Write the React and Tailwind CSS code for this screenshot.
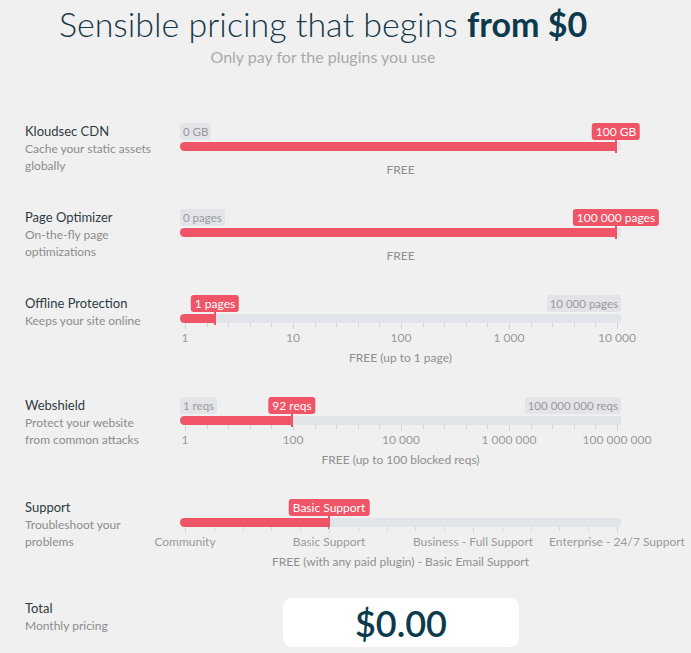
import React from 'react';

const rows = [
  {
    title: 'Kloudsec CDN',
    desc: ['Cache your static assets', 'globally'],
    handle: 436,
    tip: '100 GB',
    minLabel: '0 GB',
    footer: 'FREE',
  },
  {
    title: 'Page Optimizer',
    desc: ['On-the-fly page', 'optimizations'],
    handle: 436,
    tip: '100 000 pages',
    minLabel: '0 pages',
    footer: 'FREE',
  },
  {
    title: 'Offline Protection',
    desc: ['Keeps your site online'],
    handle: 35,
    tip: '1 pages',
    maxLabel: '10 000 pages',
    ticks: { count: 20, major: 5 },
    labels: ['1', '10', '100', '1 000', '10 000'],
    footer: 'FREE (up to 1 page)',
  },
  {
    title: 'Webshield',
    desc: ['Protect your website', 'from common attacks'],
    handle: 112,
    tip: '92 reqs',
    minLabel: '1 reqs',
    maxLabel: '100 000 000 reqs',
    ticks: { count: 20, major: 5 },
    labels: ['1', '100', '10 000', '1 000 000', '100 000 000'],
    footer: 'FREE (up to 100 blocked reqs)',
  },
  {
    title: 'Support',
    desc: ['Troubleshoot your', 'problems'],
    handle: 149,
    tip: 'Basic Support',
    ticks: { count: 15, major: 5 },
    labels: ['Community', 'Basic Support', 'Business - Full Support', 'Enterprise - 24/7 Support'],
    footer: 'FREE (with any paid plugin) - Basic Email Support',
  },
];

// scale runs from 5px to 437px inside the 441px track
const SCALE_START = 5;
const SCALE_LEN = 432;

function Slider({ row }) {
  const { handle, tip, minLabel, maxLabel, ticks, labels, footer } = row;
  return (
    <div className="w-[441px]">
      <div className="relative h-[17px]">
        {minLabel && (
          <span className="absolute left-0 top-0 h-[17px] px-[3px] rounded-[3px] bg-[#e2e4e8] text-[11.5px] leading-[17px] text-[#9a9a9a]">
            {minLabel}
          </span>
        )}
        {maxLabel && (
          <span className="absolute right-0 top-0 h-[17px] px-[3px] rounded-[3px] bg-[#e2e4e8] text-[11.5px] leading-[17px] text-[#9a9a9a]">
            {maxLabel}
          </span>
        )}
        <span
          className="absolute top-0 h-[17px] px-[4px] rounded-[3px] bg-[#ef5566] text-[12px] leading-[17px] text-white whitespace-nowrap -translate-x-1/2"
          style={{ left: handle }}
        >
          {tip}
        </span>
      </div>
      <div className="relative mt-[2px] h-[9px] rounded-[2px] bg-[#e1e4e8]">
        <div className="h-full rounded-l-[5px] bg-[#ef5566]" style={{ width: handle }} />
        <div className="absolute top-[-2px] h-[13px] w-[2px] bg-[#ef5566] -translate-x-1/2" style={{ left: handle }} />
      </div>
      {ticks && (
        <>
          <div className="relative h-[7px]">
            {Array.from({ length: ticks.count + 1 }).map((_, i) => (
              <div
                key={i}
                className={`absolute top-0 w-px bg-[#d3d5d8] ${i % ticks.major === 0 ? 'h-[6px]' : 'h-[4px]'}`}
                style={{ left: SCALE_START + (SCALE_LEN * i) / ticks.count }}
              />
            ))}
          </div>
          <div className="relative h-[16px]">
            {labels.map((l, i) => (
              <span
                key={l}
                className="absolute top-0 text-[12px] leading-[16px] text-[#9a9a9a] whitespace-nowrap -translate-x-1/2"
                style={{ left: SCALE_START + (SCALE_LEN * i) / (labels.length - 1) }}
              >
                {l}
              </span>
            ))}
          </div>
        </>
      )}
      <div className={`${ticks ? 'mt-[4px]' : 'mt-[11px]'} text-center text-[12px] leading-[16px] text-[#8f8f8f]`}>
        {footer}
      </div>
    </div>
  );
}

export default function App() {
  return (
    <div className="min-h-[653px] bg-[#f0f0f0] font-['Lato','Liberation_Sans',sans-serif] overflow-hidden">
      <div className="w-[596px] ml-[25px]">
        <div className="pt-[2px] text-center">
          <h1 className="text-[34px] leading-[44px] font-light text-[#16394a] whitespace-nowrap">
            Sensible pricing that begins <span className="font-bold text-[#0b3a4d]">from $0</span>
          </h1>
          <p className="mt-[1px] text-[16px] leading-[20px] text-[#a9a9a9]">Only pay for the plugins you use</p>
        </div>

        <div className="mt-[56px] flex flex-col">
          {rows.map((row, i) => (
            <div key={row.title} className={`flex ${i === 0 ? '' : 'mt-[31px]'}`}>
              <div className="w-[155px] shrink-0">
                <div className="text-[13px] leading-[17px] text-[#2f3b42]">{row.title}</div>
                {row.desc.map((d) => (
                  <div key={d} className="text-[12px] leading-[17px] text-[#8c8c8c]">{d}</div>
                ))}
              </div>
              <Slider row={row} />
            </div>
          ))}

          <div className="mt-[28px] flex items-start">
            <div className="w-[258px] shrink-0 pt-[2px]">
              <div className="text-[13px] leading-[17px] text-[#2f3b42]">Total</div>
              <div className="text-[12px] leading-[17px] text-[#8c8c8c]">Monthly pricing</div>
            </div>
            <div className="w-[236px] h-[49px] rounded-[9px] bg-white flex items-center justify-center">
              <span className="text-[36px] leading-none font-semibold text-[#0b3a4d]">$0.00</span>
            </div>
          </div>
        </div>
      </div>
    </div>
  );
}
